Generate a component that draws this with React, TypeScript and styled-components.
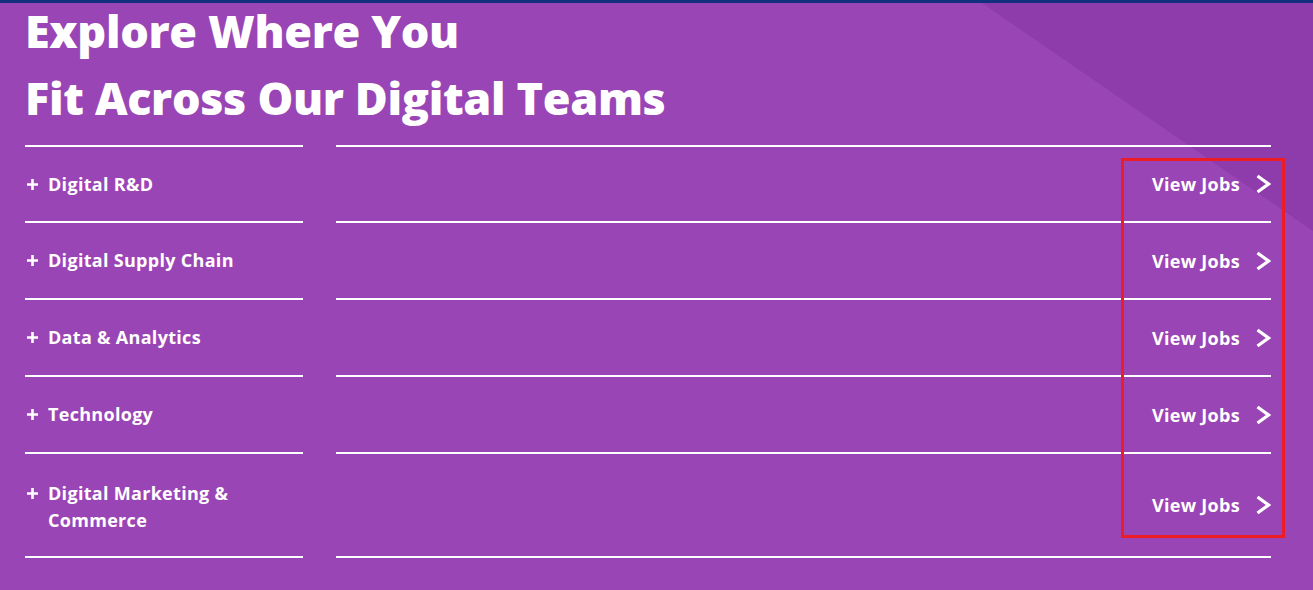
import React from "react";
import styled, { createGlobalStyle } from "styled-components";

const Global = createGlobalStyle`
  html, body { margin: 0; padding: 0; }
  body { background: #9a45b5; font-family: "Open Sans", "Lato", sans-serif; }
`;

const Page = styled.div`
  position: relative;
  width: 1313px;
  height: 590px;
  overflow: hidden;
  background: #9a45b5;
  border-top: 3px solid #13307f;
  box-sizing: border-box;
  &::before {
    content: "";
    position: absolute;
    inset: 0;
    background: #8e3cab;
    clip-path: polygon(982px 0, 1313px 0, 1313px 228px);
    pointer-events: none;
  }
`;

const Content = styled.div`
  position: relative;
  padding: 0 42px 0 25px;
`;

const Heading = styled.h1`
  margin: -6px 0 14px;
  color: #fff;
  font-family: "Open Sans", sans-serif;
  font-weight: 800;
  font-size: 45px;
  line-height: 67px;
  letter-spacing: -0.35px;
`;

const List = styled.div`
  display: flex;
  flex-direction: column;
`;

const Row = styled.div<{ $h: number }>`
  display: grid;
  grid-template-columns: 278px 1fr;
  column-gap: 33px;
  height: ${(p) => p.$h}px;
`;

const LeftCell = styled.div<{ $first?: boolean; $multi?: boolean }>`
  display: flex;
  align-items: center;
  gap: 10px;
  border-bottom: 2px solid #fff;
  border-top: ${(p) => (p.$first ? "2px solid #fff" : "none")};
  color: #fff;
  font-weight: 700;
  font-size: 18px;
  letter-spacing: 0.3px;
  line-height: 27px;
  padding-left: 2px;
  padding-top: ${(p) => (p.$multi ? "4px" : "0")};
  box-sizing: border-box;
`;

const PlusWrap = styled.div<{ $top?: boolean }>`
  align-self: ${(p) => (p.$top ? "flex-start" : "center")};
  margin-top: ${(p) => (p.$top ? "30px" : "0")};
  display: flex;
`;

const Label = styled.span`
  display: block;
  width: 210px;
`;

const RightCell = styled.div<{ $first?: boolean }>`
  display: flex;
  align-items: center;
  justify-content: flex-end;
  gap: 15px;
  border-bottom: 2px solid #fff;
  border-top: ${(p) => (p.$first ? "2px solid #fff" : "none")};
  color: #fff;
  font-weight: 700;
  font-size: 18px;
  letter-spacing: 0.3px;
`;

const Annotation = styled.div`
  position: absolute;
  left: 1121px;
  top: 155px;
  width: 158px;
  height: 374px;
  border: 3px solid #ee1c25;
  pointer-events: none;
`;

const Plus = () => (
  <svg width="11" height="11" viewBox="0 0 11 11">
    <path d="M5.5 0v11M0 5.5h11" stroke="#fff" strokeWidth="2.6" />
  </svg>
);

const Chevron = () => (
  <svg width="16" height="20" viewBox="0 0 16 20">
    <path d="M2.5 2l11 8-11 8" fill="none" stroke="#fff" strokeWidth="3.2" strokeLinejoin="miter" />
  </svg>
);

const teams = [
  { name: "Digital R&D", h: 76 },
  { name: "Digital Supply Chain", h: 77 },
  { name: "Data & Analytics", h: 77 },
  { name: "Technology", h: 77 },
  { name: "Digital Marketing & Commerce", h: 104, multi: true },
];

export default function App() {
  return (
    <>
      <Global />
      <Page>
        <Content>
          <Heading>
            Explore Where You
            <br />
            Fit Across Our Digital Teams
          </Heading>
          <List>
            {teams.map((t, i) => (
              <Row key={t.name} $h={t.h + (i === 0 ? 2 : 0)}>
                <LeftCell $first={i === 0} $multi={t.multi}>
                  <PlusWrap $top={t.multi}>
                    <Plus />
                  </PlusWrap>
                  <Label>{t.name}</Label>
                </LeftCell>
                <RightCell $first={i === 0}>
                  <span>View Jobs</span>
                  <Chevron />
                </RightCell>
              </Row>
            ))}
          </List>
        </Content>
        <Annotation />
      </Page>
    </>
  );
}
